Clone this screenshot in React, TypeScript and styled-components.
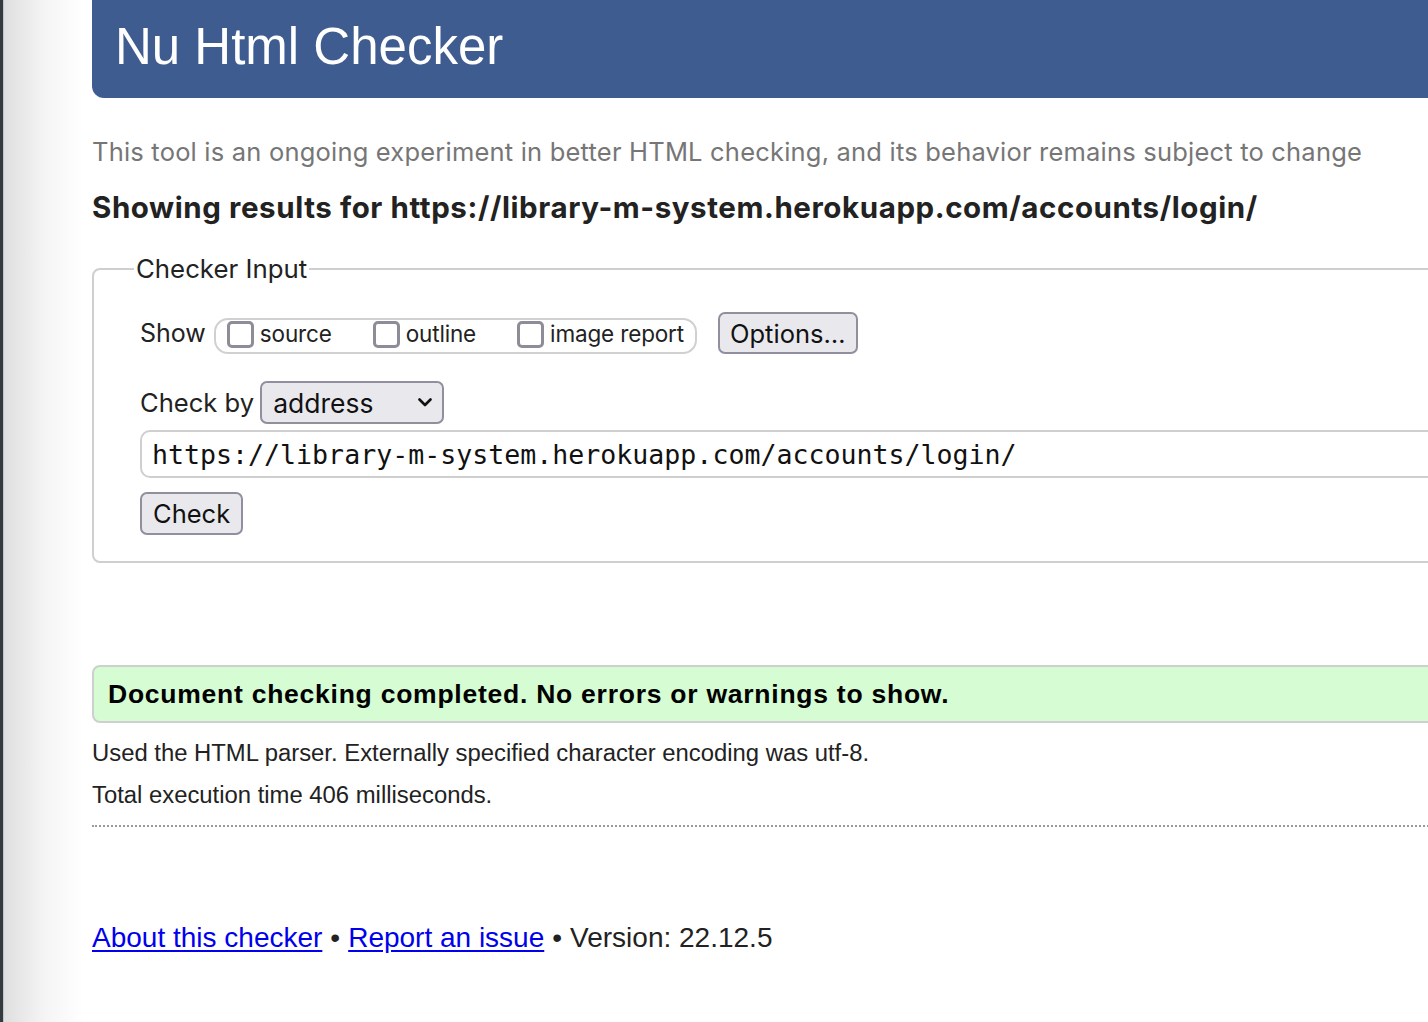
import React from 'react'
import styled, { createGlobalStyle } from 'styled-components'

const sf = `Inter, "Noto Sans", sans-serif`
const helv = `"Liberation Sans", Arial, sans-serif`
const mono = `"DejaVu Sans Mono", "Liberation Mono", monospace`

const GlobalStyle = createGlobalStyle`
  html, body {
    margin: 0;
    padding: 0;
    background: #fff;
    overflow: hidden;
  }
  body {
    font-family: ${helv};
    color: #222;
  }
`

const App = () => {
  return (
    <>
      <GlobalStyle />
      <Screen>
        <Edge />
        <Page>
          <Header>
            <Title>Nu Html Checker</Title>
          </Header>
          <Intro>
            This tool is an ongoing experiment in better HTML checking, and its behavior remains subject to change
          </Intro>
          <Results>Showing results for https://library-m-system.herokuapp.com/accounts/login/</Results>

          <Form onSubmit={e => e.preventDefault()}>
            <Fieldset>
              <Legend>Checker Input</Legend>
              <ShowRow>
                <RowLabel>Show</RowLabel>
                <Toggles>
                  <Toggle>
                    <Checkbox type="checkbox" />
                    <span>source</span>
                  </Toggle>
                  <Toggle>
                    <Checkbox type="checkbox" />
                    <span>outline</span>
                  </Toggle>
                  <Toggle>
                    <Checkbox type="checkbox" />
                    <span>image report</span>
                  </Toggle>
                </Toggles>
                <Button type="button" wide>
                  Options…
                </Button>
              </ShowRow>
              <CheckByRow>
                <RowLabel>Check by</RowLabel>
                <SelectWrap>
                  <Select defaultValue="address">
                    <option value="address">address</option>
                    <option value="file">file upload</option>
                    <option value="text">text input</option>
                  </Select>
                  <Chevron width="14" height="9" viewBox="0 0 14 9">
                    <path d="M1.5 1.5 L7 7 L12.5 1.5" fill="none" stroke="#111" strokeWidth="2.6" strokeLinecap="round" strokeLinejoin="round" />
                  </Chevron>
                </SelectWrap>
              </CheckByRow>
              <UrlInput type="url" defaultValue="https://library-m-system.herokuapp.com/accounts/login/" />
              <Button type="submit">Check</Button>
            </Fieldset>
          </Form>

          <Success>Document checking completed. No errors or warnings to show.</Success>
          <Details>
            <p>Used the HTML parser. Externally specified character encoding was utf-8.</p>
            <p>Total execution time 406 milliseconds.</p>
          </Details>

          <Footer>
            <a href="#about">About this checker</a>
            <Dot>•</Dot>
            <a href="#issue">Report an issue</a>
            <Dot>•</Dot>
            Version: 22.12.5
          </Footer>
        </Page>
      </Screen>
    </>
  )
}

const Screen = styled.div`
  display: flex;
  min-height: 100vh;
  width: 100%;
  overflow: hidden;
`

const Edge = styled.div`
  flex: 0 0 89px;
  border-left: 3px solid #343b40;
  box-shadow: inset 1px 0 0 #c4c4c4;
  background: linear-gradient(to right, #dedede 0%, #f4f4f4 45%, #fff 90%);
`

const Page = styled.main`
  flex: 0 0 1420px;
  display: flex;
  flex-direction: column;
`

const Header = styled.header`
  height: 98px;
  box-sizing: border-box;
  padding: 0 0 4px 23px;
  background: #3e5c8f;
  border-bottom-left-radius: 12px;
`

const Title = styled.h1`
  margin: 0;
  font-family: ${helv};
  font-weight: 400;
  font-size: 51px;
  line-height: 94px;
  color: #fff;
`

const Intro = styled.p`
  margin: 39px 0 0;
  font-family: ${sf};
  font-size: 25.5px;
  letter-spacing: 0.2px;
  line-height: 30px;
  color: #767676;
  white-space: nowrap;
`

const Results = styled.h2`
  margin: 23px 0 0;
  font-family: ${sf};
  font-weight: 700;
  font-size: 29.5px;
  letter-spacing: 0.58px;
  line-height: 34px;
  color: #222;
  white-space: nowrap;
`

const Form = styled.form`
  margin-top: 30px;
`

const Fieldset = styled.fieldset`
  margin: 0;
  padding: 0 46px 26px;
  border: 2px solid #cfcfcf;
  border-radius: 8px;
  display: flex;
  flex-direction: column;
  align-items: flex-start;
`

const Legend = styled.legend`
  margin-left: -6px;
  padding: 0 2px;
  font-family: ${sf};
  font-size: 25.8px;
  line-height: 30px;
  color: #222;
`

const ShowRow = styled.div`
  display: flex;
  align-items: flex-end;
  margin-top: 28px;
`

const CheckByRow = styled.div`
  display: flex;
  align-items: center;
  margin-top: 27px;
`

const RowLabel = styled.span`
  font-family: ${sf};
  font-size: 25px;
  line-height: 36px;
  margin-bottom: 3px;
  margin-right: 8px;
  color: #222;
  ${CheckByRow} & {
    margin: 0 6px 0 0;
    font-size: 25.6px;
  }
`

const Toggles = styled.div`
  display: flex;
  align-items: center;
  gap: 41px;
  height: 36px;
  box-sizing: border-box;
  padding: 0 11px 4px;
  border: 2px solid #d0d0d0;
  border-radius: 14px;
`

const Toggle = styled.label`
  display: flex;
  align-items: center;
  gap: 6px;
  font-family: ${sf};
  font-size: 22.5px;
  letter-spacing: -0.15px;
  line-height: 28px;
  color: #222;
`

const Checkbox = styled.input`
  appearance: none;
  margin: 0;
  width: 27px;
  height: 27px;
  box-sizing: border-box;
  border: 3px solid #8d8d97;
  border-radius: 5px;
  background: #fff;
`

const Button = styled.button<{ wide?: boolean }>`
  margin-left: ${props => (props.wide ? '21px' : '0')};
  height: ${props => (props.wide ? '42px' : '43px')};
  padding: 0 ${props => (props.wide ? '10px' : '11px')};
  font-family: ${sf};
  font-size: 25.5px;
  color: #111;
  background: #e9e9ed;
  border: 2px solid #8f8f9d;
  border-radius: 7px;
`

const SelectWrap = styled.div`
  position: relative;
  width: 184px;
  height: 43px;
`

const Select = styled.select`
  appearance: none;
  width: 100%;
  height: 100%;
  margin: 0;
  padding: 0 0 0 11px;
  font-family: ${sf};
  font-size: 26.5px;
  color: #111;
  background: #e9e9ed;
  border: 2px solid #8f8f9d;
  border-radius: 7px;
`

const Chevron = styled.svg`
  position: absolute;
  right: 12px;
  top: 17px;
  pointer-events: none;
`

const UrlInput = styled.input`
  margin: 6px 0 14px;
  width: 1400px;
  height: 48px;
  box-sizing: border-box;
  padding: 0 10px;
  font-family: ${mono};
  font-size: 26.6px;
  color: #111;
  border: 2px solid #cfcfcf;
  border-radius: 10px;
  outline: none;
`

const Success = styled.div`
  margin-top: 102px;
  height: 58px;
  box-sizing: border-box;
  padding: 0 14px;
  display: flex;
  align-items: center;
  font-family: ${helv};
  font-weight: 700;
  font-size: 26.5px;
  letter-spacing: 0.75px;
  color: #000;
  background: #d5fcd2;
  border: 2px solid #cfcfcf;
  border-radius: 8px;
`

const Details = styled.div`
  border-bottom: 2px dotted #9a9a9a;
  padding-bottom: 9px;
  p {
    margin: 0;
    font-family: ${helv};
    font-size: 23.85px;
    line-height: 42px;
    color: #222;
  }
  p:first-child {
    margin-top: 9px;
  }
`

const Footer = styled.footer`
  margin-top: 94px;
  font-family: ${helv};
  font-size: 28px;
  line-height: 34px;
  color: #222;
  a {
    color: #0000ee;
    text-decoration: underline;
    text-underline-offset: 3px;
  }
`

const Dot = styled.span`
  margin: 0 8px;
`

export default App
